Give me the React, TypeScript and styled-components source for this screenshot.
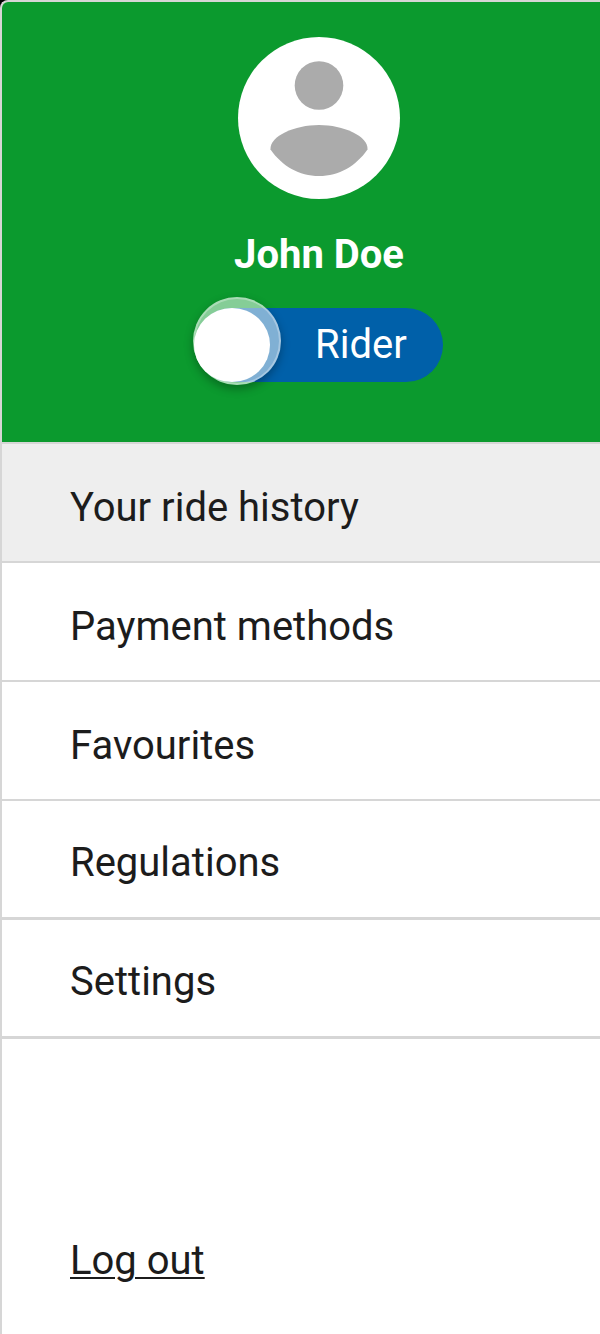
import React from "react";
import styled, { createGlobalStyle } from "styled-components";

const GlobalStyle = createGlobalStyle`
  * { box-sizing: border-box; }
  html, body, #root { height: 100%; }
  body {
    margin: 0;
    background: #000;
    color: #1c1c1c;
    font-family: Roboto, "Liberation Sans", sans-serif;
  }
`;

const Drawer = styled.main`
  display: flex;
  flex-direction: column;
  min-height: 100%;
  overflow: hidden;
  background: #fff;
  border-left: 2px solid #d6d6d6;
  border-top: 2px solid #d6d6d6;
  border-top-left-radius: 8px;
`;

const Profile = styled.header`
  display: flex;
  flex-direction: column;
  align-items: center;
  padding: 35px 0 60px 36px;
  background: #0b9a2e;
`;

const Avatar = styled.svg`
  display: block;
  width: 162px;
  height: 162px;
`;

const Name = styled.h1`
  margin: 32px 0 29px;
  color: #fff;
  font-size: 40px;
  font-weight: 700;
  line-height: 48px;
`;

const RoleSwitch = styled.label`
  position: relative;
  display: flex;
  align-items: center;
  width: 248px;
  height: 74px;
  padding-left: 120px;
  border-radius: 37px;
  background: #0060a9;
  color: #fff;
  font-size: 40px;
  line-height: 48px;
  cursor: pointer;
`;

const SwitchInput = styled.input`
  position: absolute;
  inset: 0;
  width: 100%;
  height: 100%;
  margin: 0;
  opacity: 0;
  cursor: pointer;
`;

const Thumb = styled.span`
  position: absolute;
  top: -11px;
  left: -2px;
  width: 88px;
  height: 88px;
  border: 2px solid rgba(255, 255, 255, 0.3);
  border-radius: 50%;
  background: rgba(255, 255, 255, 0.5);
  box-shadow: 0 4px 10px rgba(0, 0, 0, 0.3);
  pointer-events: none;

  &::after {
    content: "";
    position: absolute;
    top: 9px;
    left: -1px;
    width: 76px;
    height: 74px;
    border-radius: 50%;
    background: #fff;
  }
`;

const Menu = styled.nav`
  display: flex;
  flex-direction: column;
  border-top: 2px solid #d6d6d6;
`;

const MenuLink = styled.a<{ $active?: boolean }>`
  display: block;
  padding: 40px 68px 29px;
  border-bottom: 2px solid #d6d6d6;
  background: ${(p) => (p.$active ? "#eee" : "#fff")};
  color: inherit;
  font-size: 40px;
  line-height: 48px;
  text-decoration: none;

  &:nth-last-child(-n + 2) {
    padding-top: 38px;
    padding-bottom: 30px;
    border-bottom-width: 3px;
  }
`;

const Footer = styled.footer`
  margin-top: auto;
  padding: 0 68px 49px;
`;

const LogOut = styled.button`
  padding: 0;
  border: 0;
  background: none;
  color: inherit;
  font: inherit;
  font-size: 40px;
  line-height: 48px;
  text-decoration: underline;
  text-decoration-thickness: 2px;
  text-underline-offset: 3px;
  cursor: pointer;
`;

const items = ["Your ride history", "Payment methods", "Favourites", "Regulations", "Settings"];

export default function App() {
  return (
    <>
      <GlobalStyle />
      <Drawer>
        <Profile>
          <Avatar viewBox="0 0 162 162" aria-hidden="true">
            <circle cx="81" cy="81" r="81" fill="#fff" />
            <circle cx="81" cy="48.5" r="24.3" fill="#ababab" />
            <path d="M32.5 112.5C31.5 99 57 88 81 88s49.500 11 48.500 24.500C118 129 101 139 81 139s-37-10-48.500-26.500Z" fill="#ababab" />
          </Avatar>
          <Name>John Doe</Name>
          <RoleSwitch>
            <SwitchInput type="checkbox" role="switch" />
            <Thumb />
            Rider
          </RoleSwitch>
        </Profile>
        <Menu>
          {items.map((item, i) => (
            <MenuLink key={item} href="#" $active={i === 0}>
              {item}
            </MenuLink>
          ))}
        </Menu>
        <Footer>
          <LogOut type="button">Log out</LogOut>
        </Footer>
      </Drawer>
    </>
  );
}
